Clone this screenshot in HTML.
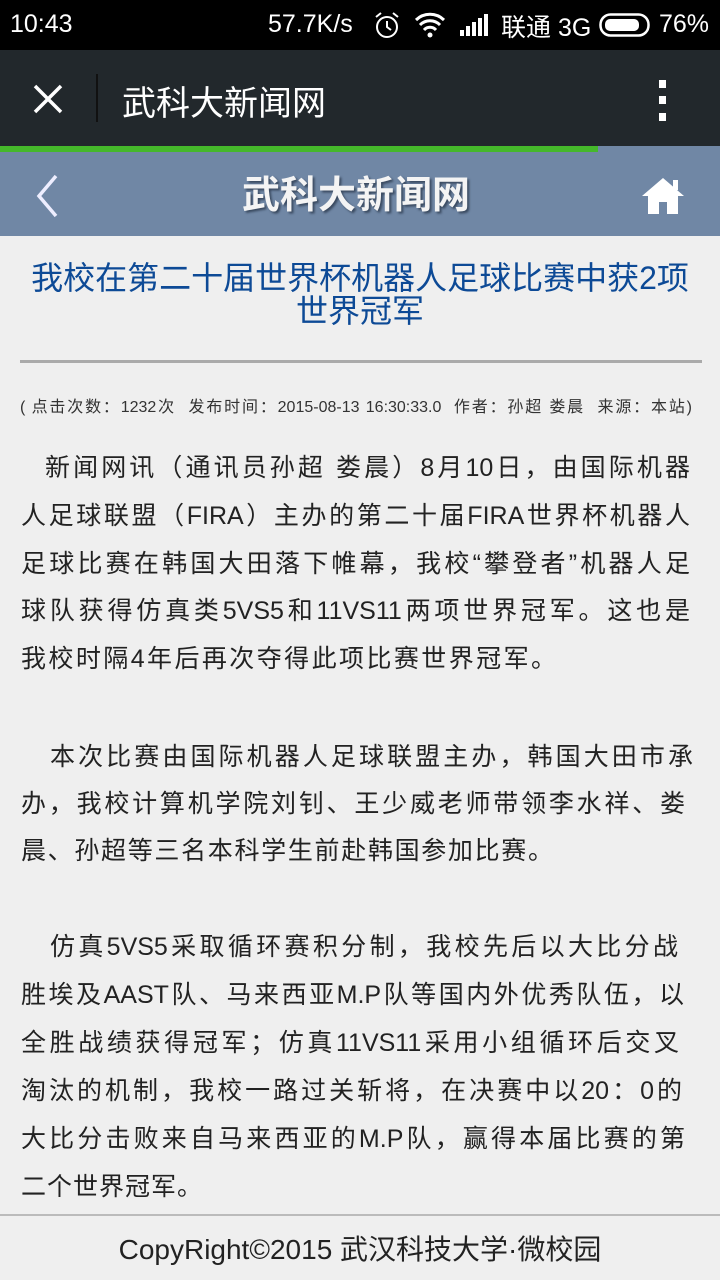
<!DOCTYPE html>
<html><head><meta charset="utf-8"><style>
*{margin:0;padding:0;box-sizing:border-box}
body{width:720px;height:1280px;overflow:hidden;background:#efefef;font-family:"Liberation Sans","Noto Sans CJK SC",sans-serif;position:relative;color:#222}
.a{position:absolute;white-space:nowrap}
.sb{top:0;left:0;width:720px;height:50px;background:#000;color:#fff;font-size:25px}
.tb{top:50px;left:0;width:720px;height:96px;background:#22282c}
.hd{top:146px;left:0;width:720px;height:90px;background:#7087a5}
.ln{font-size:25px;left:21px;line-height:30px}
.j{width:669px;text-align:justify;text-align-last:justify;white-space:normal}
</style></head><body>
<div class="a sb">
<span class="a" style="left:10px;top:10px">10:43</span>
<span class="a" style="left:268px;top:10px">57.7K/s</span>
<svg class="a" style="left:372px;top:10px" width="30" height="30" viewBox="0 0 30 30"><circle cx="15" cy="17" r="10" fill="none" stroke="#fff" stroke-width="2"/><path d="M15 11v6l4 3M4 7l5-4M26 7l-5-4" stroke="#fff" stroke-width="2" fill="none"/></svg>
<svg class="a" style="left:414px;top:12px" width="32" height="26" viewBox="0 0 32 26"><path d="M2 8a20 20 0 0 1 28 0M6 13a14 14 0 0 1 20 0M10 18a8 8 0 0 1 12 0" stroke="#fff" stroke-width="3" fill="none"/><circle cx="16" cy="23" r="2.5" fill="#fff"/></svg>
<svg class="a" style="left:460px;top:14px" width="30" height="22"><rect x="0" y="16" width="4" height="6" fill="#fff"/><rect x="6" y="12" width="4" height="10" fill="#fff"/><rect x="12" y="8" width="4" height="14" fill="#fff"/><rect x="18" y="4" width="4" height="18" fill="#fff"/><rect x="24" y="0" width="4" height="22" fill="#fff"/></svg>
<span class="a" style="left:501px;top:8px">联通 3G</span>
<svg class="a" style="left:599px;top:13px" width="54" height="24"><rect x="1.5" y="1.5" width="48" height="21" rx="10" fill="none" stroke="#fff" stroke-width="2.5"/><rect x="6" y="6" width="34" height="12" rx="5" fill="#fff"/></svg>
<span class="a" style="left:659px;top:10px">76%</span>
</div>
<div class="a tb">
<svg class="a" style="left:32px;top:33px" width="32" height="32"><path d="M3 3L29 29M29 3L3 29" stroke="#fff" stroke-width="3.5"/></svg>
<div class="a" style="left:96px;top:24px;width:2px;height:48px;background:#111"></div>
<span class="a" style="left:122px;top:26px;color:#fff;font-size:34px">武科大新闻网</span>
<div class="a" style="left:659px;top:30px;width:7px;height:8px;background:#fff"></div>
<div class="a" style="left:659px;top:46px;width:7px;height:8px;background:#fff"></div>
<div class="a" style="left:659px;top:63px;width:7px;height:8px;background:#fff"></div>
</div>
<div class="a" style="top:146px;left:0;width:598px;height:6px;background:#45b82b;z-index:2"></div>
<div class="a hd">
<svg class="a" style="left:34px;top:28px" width="26" height="44"><path d="M22 2L5 22L22 42" stroke="#eef" stroke-width="3.5" fill="none"/></svg>
<span class="a" style="left:-4px;width:720px;text-align:center;top:18px;color:#f4f4f4;font-size:38px;font-weight:bold;text-shadow:2px 2px 2px #3a4a60">武科大新闻网</span>
<svg class="a" style="left:640px;top:30px" width="46" height="38" viewBox="0 0 46 38"><path d="M23 2L2 20h6v18h11V26h8v12h11V20h6L23 2z" fill="#fff"/><rect x="33" y="4" width="5" height="10" fill="#fff"/></svg>
</div>
<div class="a" style="top:262px;left:0;width:720px;text-align:center;color:#0d4a96;font-size:32px;line-height:33px">我校在第二十届世界杯机器人足球比赛中获2项<br>世界冠军</div>
<div class="a" style="top:360px;left:20px;width:682px;height:3px;background:#aaa"></div>
<div class="a" style="top:393px;left:20px;width:672px;font-size:16px;color:#333;text-align:justify;text-align-last:justify;white-space:normal">( 点击次数：1232次&nbsp; 发布时间：2015-08-13 16:30:33.0&nbsp; 作者：孙超 娄晨&nbsp; 来源：本站)</div>
<div class="a ln j" style="top:453px;left:45px;width:645px">新闻网讯（通讯员孙超 娄晨）8月10日，由国际机器</div>
<div class="a ln j" style="top:501px">人足球联盟（FIRA）主办的第二十届FIRA世界杯机器人</div>
<div class="a ln j" style="top:549px">足球比赛在韩国大田落下帷幕，我校“攀登者”机器人足</div>
<div class="a ln j" style="top:596px">球队获得仿真类5VS5和11VS11两项世界冠军。这也是</div>
<div class="a ln j" style="top:644px;width:535px">我校时隔4年后再次夺得此项比赛世界冠军。</div>
<div class="a ln j" style="top:742px;left:50px;width:643px">本次比赛由国际机器人足球联盟主办，韩国大田市承</div>
<div class="a ln j" style="top:789px;width:664px">办，我校计算机学院刘钊、王少威老师带领李水祥、娄</div>
<div class="a ln j" style="top:836px;width:532px">晨、孙超等三名本科学生前赴韩国参加比赛。</div>
<div class="a ln j" style="top:932px;left:50px;width:628px">仿真5VS5采取循环赛积分制，我校先后以大比分战</div>
<div class="a ln j" style="top:980px;width:663px">胜埃及AAST队、马来西亚M.P队等国内外优秀队伍，以</div>
<div class="a ln j" style="top:1028px;width:658px">全胜战绩获得冠军；仿真11VS11采用小组循环后交叉</div>
<div class="a ln j" style="top:1076px;width:661px">淘汰的机制，我校一路过关斩将，在决赛中以20：0的</div>
<div class="a ln j" style="top:1124px;width:664px">大比分击败来自马来西亚的M.P队，赢得本届比赛的第</div>
<div class="a ln j" style="top:1172px;width:181px">二个世界冠军。</div>
<div class="a" style="top:1214px;left:0;width:720px;height:66px;background:#efefef;border-top:2px solid #bbb"></div>
<div class="a" style="top:1228px;left:0;width:720px;text-align:center;font-size:28px;color:#222">CopyRight©2015 武汉科技大学·微校园</div>
</body></html>
